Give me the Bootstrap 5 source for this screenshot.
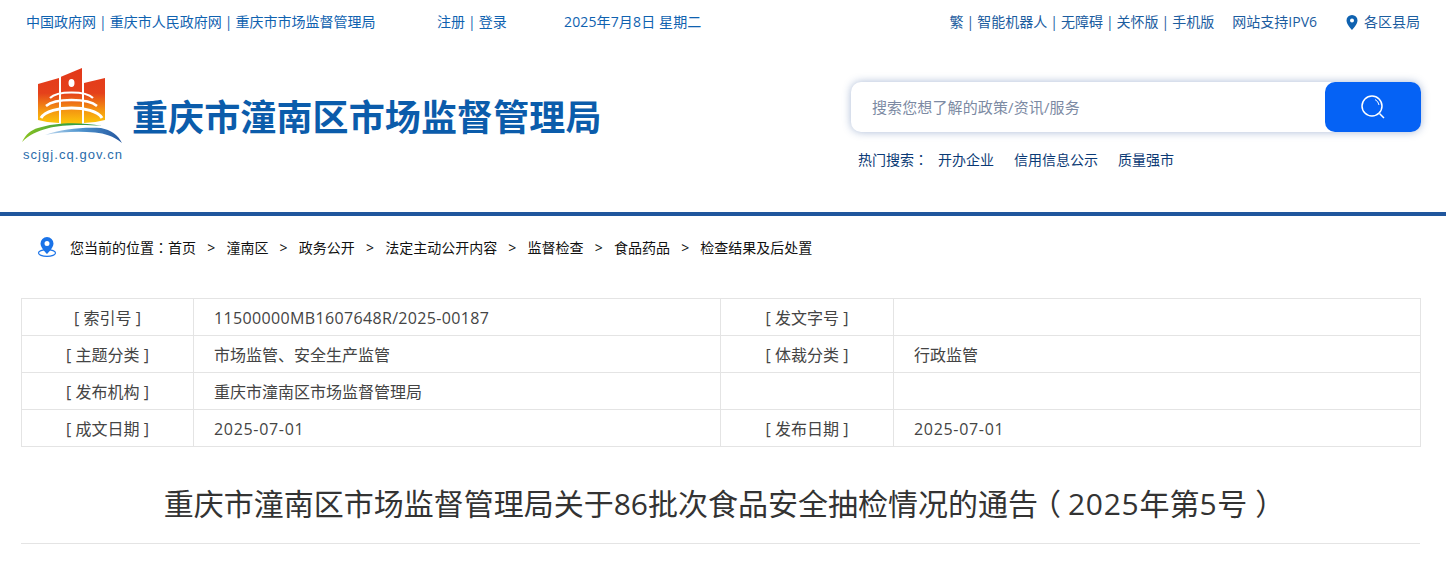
<!DOCTYPE html>
<html lang="zh-CN">
<head>
<meta charset="utf-8">
<title>重庆市潼南区市场监督管理局</title>
<link rel="stylesheet" href="https://cdn.jsdelivr.net/npm/bootstrap@5.3.0/dist/css/bootstrap.min.css">
<style>
body{font-family:"Open Sans","Noto Sans CJK SC",sans-serif;background:#fff;color:#333;overflow:hidden}
a{text-decoration:none;color:inherit}
.fw-glyph{font-family:"Noto Sans CJK TC",sans-serif}
.paren-glyph{font-feature-settings:"halt";margin:0 7px 0 8px}
.topstrip{height:44px;padding:0 26px 0 26px;font-size:14px;line-height:44px;color:#0f62b0}
.topstrip .sep{margin:0 3px}
.topleft{width:411px}
.topreg{width:127px}
.topdate{letter-spacing:.14px}
.toplinks{color:#1c5d9f}
.ipv6{margin-left:18px}
.pin{margin:0 6px 0 29px}
.brandrow{height:168px;padding:24px 25px 0 21px}
.brandlogo{width:103px}
.logodomain{font-family:"Liberation Sans",sans-serif;font-size:13px;letter-spacing:1.05px;color:#2a6cab;line-height:16px;margin:1px 0 0 2px;white-space:nowrap}
.brandname{font-size:36px;font-weight:700;color:#0b5cab;margin-left:8px;line-height:44px;margin-top:5px;letter-spacing:.12px}
.searchcol{width:570px;margin-top:14px}
.searchbox{height:50px;border-radius:10px;background:#fff;box-shadow:0 0 8px rgba(40,80,150,.4)}
.searchtext{font-size:15px;color:#7c8aa3;padding-left:21px;letter-spacing:.12px}
.searchbtn{width:96px;height:50px;border-radius:10px;background:#0562f5}
.hotrow{font-size:14px;color:#0b3a75;margin-top:17px;padding-left:7px;line-height:20px}
.hotrow a{margin-right:20px}
.hotlabel{margin-right:10px}
.rule{height:4px;background:#20569d}
.crumbs{height:62px;margin-bottom:20px;padding-left:37px;font-size:14px;color:#111}
.crumbs .gt{margin:0 11.2px}
.crumbs svg{margin-right:13px}
.metatable{margin:0 26px 0 21px;width:1399px;table-layout:fixed;border-collapse:separate;border-spacing:0;border-top:1px solid #e4e4e4;border-left:1px solid #e4e4e4;font-size:16px;color:#444}
.metatable td{border-right:1px solid #e4e4e4;border-bottom:1px solid #e4e4e4;height:37px;padding:4px 20px 0;vertical-align:middle;line-height:1.2}
.metatable td.lab{text-align:center;padding:4px 0 0}
.latin{letter-spacing:.35px}
.metatable td.datecell{letter-spacing:.68px}
.doctitle{font-size:30px;font-weight:400;color:#333;text-align:center;margin:35px 26px 0 21px;padding-bottom:17px;line-height:44px;border-bottom:1px solid #e4e4e4}
.titledigits{letter-spacing:.7px}
</style>
</head>
<body>
<div class="topstrip d-flex align-items-center">
  <div class="topleft text-nowrap"><a href="#">中国政府网</a><span class="sep">|</span><a href="#">重庆市人民政府网</a><span class="sep">|</span><a href="#">重庆市市场监督管理局</a></div>
  <div class="topreg text-nowrap"><a href="#">注册</a><span class="sep">|</span><a href="#">登录</a></div>
  <div class="topdate text-nowrap">2025年7月8日 星期二</div>
  <div class="toplinks ms-auto text-nowrap d-flex align-items-center">
    <a href="#">繁</a><span class="sep">|</span><a href="#">智能机器人</a><span class="sep">|</span><a href="#">无障碍</a><span class="sep">|</span><a href="#">关怀版</a><span class="sep">|</span><a href="#">手机版</a>
    <span class="ipv6">网站支持IPV6</span>
    <svg class="pin" width="12" height="15" viewBox="0 0 12 15"><path fill="#0f62b0" fill-rule="evenodd" d="M6 0a5.500 5.500 0 0 0-5.500 5.500C.5 9.500 6 15 6 15s5.500-5.500 5.500-9.500A5.500 5.500 0 0 0 6 0zm0 3.500a2 2 0 1 1 0 4 2 2 0 0 1 0-4z"/></svg>
    <a href="#">各区县局</a>
  </div>
</div>
<div class="brandrow d-flex align-items-start justify-content-between">
  <div class="d-flex align-items-center">
    <div class="brandlogo">
      <svg width="103" height="78" viewBox="0 0 103 78" class="d-block">
        <defs>
          <linearGradient id="lg" gradientUnits="userSpaceOnUse" x1="0" y1="0" x2="0" y2="56"><stop offset="0" stop-color="#e2381a"/><stop offset=".45" stop-color="#e5411b"/><stop offset=".75" stop-color="#f49412"/><stop offset="1" stop-color="#fdc90a"/></linearGradient>
          <linearGradient id="lb" x1="0" y1="0" x2="1" y2="0"><stop offset="0" stop-color="#c5dcf0"/><stop offset=".45" stop-color="#4f95cf"/><stop offset="1" stop-color="#24569f"/></linearGradient>
          <linearGradient id="lgr" x1="0" y1="0" x2="1" y2="0"><stop offset="0" stop-color="#8cc21f"/><stop offset=".6" stop-color="#35a044"/><stop offset="1" stop-color="#2f9a60"/></linearGradient>
        </defs>
        <path fill="url(#lg)" d="M17 16 38 10V55Q27 55 17 52Z"/>
        <path fill="url(#lg)" d="M40 8.700 61 0V56H40Z"/>
        <path fill="url(#lg)" d="M63 15 84 10V52Q73 55 63 55Z"/>
        <ellipse cx="50.500" cy="15" rx="3" ry="4" fill="#fff"/>
        <g fill="none" stroke="#fff">
          <path stroke-width="2.200" d="M29 30C33 26 42 24.500 50.500 24.500S68 26 72 30"/>
          <path stroke-width="2.400" d="M25 38C30 33.500 41 32 50.500 32S71 33.500 76 38"/>
          <path stroke-width="3" d="M20 50C24 43 38 40 50.500 40S77 43 81 50"/>
        </g>
        <path fill="url(#lgr)" d="M1 74C5 66 10 62 17 60C35 54 60 54 81 58C60 56 40 57 28 60C16 63 8 67 1 74Z"/>
        <path fill="url(#lb)" d="M24 67C40 61 62 59 80 60C90 62 97 67 101 75C92 68 84 65.500 74 64.500C56 63 40 64 24 67Z"/>
      </svg>
      <div class="logodomain">scjgj.cq.gov.cn</div>
    </div>
    <div class="brandname text-nowrap">重庆市潼南区市场监督管理局</div>
  </div>
  <div class="searchcol">
    <div class="searchbox d-flex align-items-center justify-content-between">
      <span class="searchtext">搜索您想了解的政策/资讯/服务</span>
      <a class="searchbtn d-flex align-items-center justify-content-center" href="#">
        <svg width="26" height="26" viewBox="0 0 26 26" fill="none" stroke="#fff" stroke-width="1.500"><circle cx="12" cy="12" r="10"/><path d="M19.500 19.500 24 24"/><path d="M15 5.500A7.500 7.500 0 0 1 19 11" stroke-width="1"/></svg>
      </a>
    </div>
    <div class="hotrow text-nowrap"><span class="hotlabel">热门搜索<span class="fw-glyph" lang="zh-TW">：</span></span><a href="#">开办企业</a><a href="#">信用信息公示</a><a href="#">质量强市</a></div>
  </div>
</div>
<div class="rule"></div>
<div class="crumbs d-flex align-items-center text-nowrap">
  <svg width="20" height="20" viewBox="0 0 20 20"><ellipse cx="10" cy="16" rx="8.500" ry="3.300" fill="none" stroke="#1a73e8" stroke-width="1.200"/><path fill="#1a73e8" fill-rule="evenodd" d="M10 0a6.500 6.500 0 0 0-6.500 6.500C3.500 11 10 17 10 17s6.500-6 6.500-10.500A6.500 6.500 0 0 0 10 0zm0 4a2.500 2.500 0 1 1 0 5 2.500 2.500 0 0 1 0-5z"/></svg>
  <span>您当前的位置<span class="fw-glyph" lang="zh-TW">：</span></span><a href="#">首页</a><span class="gt">&gt;</span><a href="#">潼南区</a><span class="gt">&gt;</span><a href="#">政务公开</a><span class="gt">&gt;</span><a href="#">法定主动公开内容</a><span class="gt">&gt;</span><a href="#">监督检查</a><span class="gt">&gt;</span><a href="#">食品药品</a><span class="gt">&gt;</span><a href="#">检查结果及后处置</a>
</div>
<table class="metatable">
  <colgroup><col style="width:172px"><col style="width:527px"><col style="width:173px"><col style="width:527px"></colgroup>
  <tr><td class="lab">[ 索引号 ]</td><td class="latin">11500000MB1607648R/2025-00187</td><td class="lab">[ 发文字号 ]</td><td></td></tr>
  <tr><td class="lab">[ 主题分类 ]</td><td>市场监管、安全生产监管</td><td class="lab">[ 体裁分类 ]</td><td>行政监管</td></tr>
  <tr><td class="lab">[ 发布机构 ]</td><td>重庆市潼南区市场监督管理局</td><td class="lab"></td><td></td></tr>
  <tr><td class="lab">[ 成文日期 ]</td><td class="datecell">2025-07-01</td><td class="lab">[ 发布日期 ]</td><td class="datecell">2025-07-01</td></tr>
</table>
<h1 class="doctitle">重庆市潼南区市场监督管理局关于86批次食品安全抽检情况的通告<span class="paren-glyph">（</span><span class="titledigits">2025</span>年第<span class="titledigits">5</span>号<span class="paren-glyph">）</span></h1>
<script src="https://cdn.jsdelivr.net/npm/bootstrap@5.3.0/dist/js/bootstrap.bundle.min.js"></script>
</body>
</html>
